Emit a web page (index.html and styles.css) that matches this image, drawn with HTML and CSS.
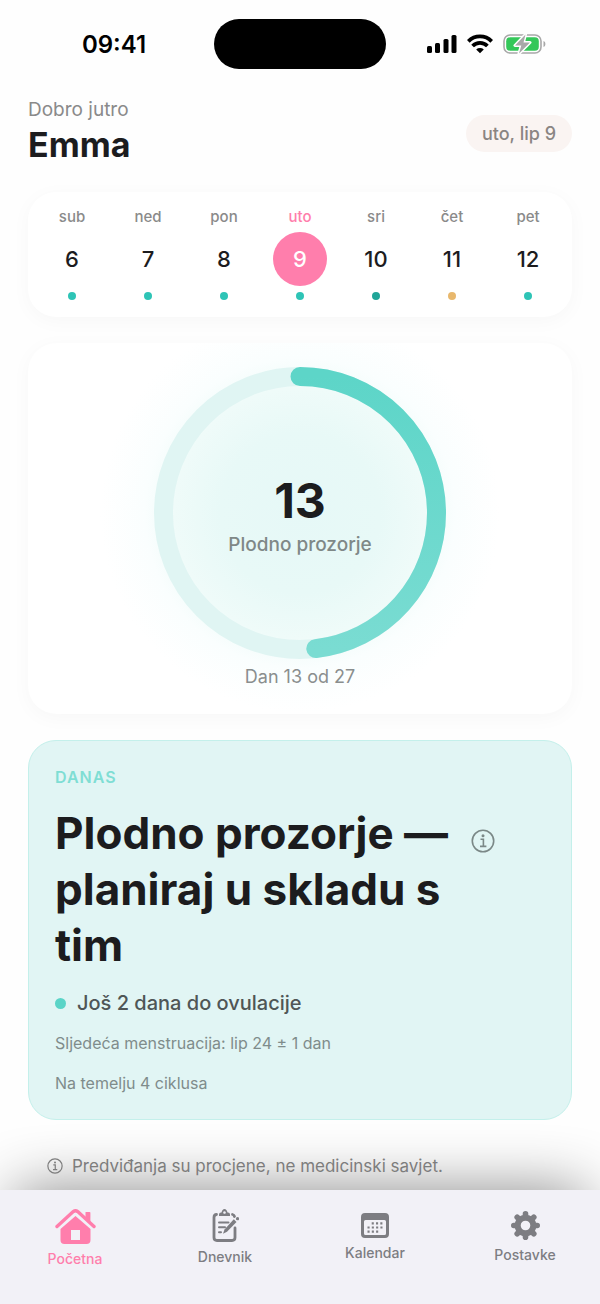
FILE: index.html
```html
<!DOCTYPE html>
<html lang="hr">
<head>
    <meta charset="UTF-8">
    <meta name="viewport" content="width=device-width, initial-scale=1.0">
    <title>Početna</title>
    <link rel="stylesheet" href="styles.css">
</head>
<body>
    <div class="status-bar">
        <div class="time">09:41</div>
        <div class="island"></div>
        <div class="status-icons">
            <svg width="30" height="20" viewBox="0 0 30 20">
                <rect x="0" y="12" width="5" height="7" rx="1.5"/>
                <rect x="8" y="9" width="5" height="10" rx="1.5"/>
                <rect x="16.500" y="5" width="5" height="14" rx="1.5"/>
                <rect x="24.500" y="1" width="5" height="18" rx="1.5"/>
            </svg>
            <svg width="26" height="20" viewBox="0 0 26 20">
                <g fill="none" stroke="#000" stroke-width="3.800">
                    <path d="M1.300 7.300 A16.500 16.500 0 0 1 24.700 7.300"/>
                    <path d="M5.600 12 A10.500 10.500 0 0 1 20.400 12"/>
                </g>
                <path d="M13 19.200 L9.200 15.600 A5.600 5.600 0 0 1 16.800 15.600 Z"/>
            </svg>
            <svg width="43" height="20" viewBox="0 0 43 20">
                <rect x="1" y="1" width="37" height="18" rx="6" fill="none" stroke="#a8a8a8" stroke-width="1.600"/>
                <path d="M40.500 7 C43 7.500 43 12.500 40.500 13 Z" fill="#a8a8a8"/>
                <rect x="3.200" y="3.200" width="32.600" height="13.600" rx="4" fill="#34c759"/>
                <path d="M22.500 0.500 L12 11.500 H18.300 L16 19.500 L27 8.500 H20.500 Z" fill="#a8a8a8" stroke="#fff" stroke-width="3" paint-order="stroke" stroke-linejoin="round"/>
            </svg>
        </div>
    </div>

    <main class="content">
        <header class="header">
            <div>
                <p class="greeting">Dobro jutro</p>
                <h1>Emma</h1>
            </div>
            <span class="date-pill">uto, lip 9</span>
        </header>

        <section class="card week">
            <button class="day"><span class="day-name">sub</span><span class="day-number">6</span><span class="dot"></span></button>
            <button class="day"><span class="day-name">ned</span><span class="day-number">7</span><span class="dot"></span></button>
            <button class="day"><span class="day-name">pon</span><span class="day-number">8</span><span class="dot"></span></button>
            <button class="day selected"><span class="day-name">uto</span><span class="day-number">9</span><span class="dot"></span></button>
            <button class="day"><span class="day-name">sri</span><span class="day-number">10</span><span class="dot ovulation"></span></button>
            <button class="day"><span class="day-name">čet</span><span class="day-number">11</span><span class="dot luteal"></span></button>
            <button class="day"><span class="day-name">pet</span><span class="day-number">12</span><span class="dot"></span></button>
        </section>

        <section class="card cycle">
            <div class="ring">
                <svg width="292" height="292" viewBox="0 0 292 292">
                    <defs>
                        <linearGradient id="arc" x1="0" y1="0" x2="1" y2="0">
                            <stop offset="0" stop-color="#7adcd2"/>
                            <stop offset="1" stop-color="#5dd5c8"/>
                        </linearGradient>
                    </defs>
                    <g fill="none" stroke-width="19" transform="rotate(-90 146 146)">
                        <circle cx="146" cy="146" r="136.500" stroke="#e0f5f3"/>
                        <circle cx="146" cy="146" r="136.500" stroke="url(#arc)" stroke-linecap="round" pathLength="27" stroke-dasharray="13 27"/>
                    </g>
                </svg>
                <div class="ring-label">
                    <strong>13</strong>
                    <span>Plodno prozorje</span>
                </div>
            </div>
            <p class="cycle-day">Dan 13 od 27</p>
        </section>

        <section class="today">
            <p class="today-label">Danas</p>
            <div class="today-title">
                <h2>Plodno prozorje — planiraj u skladu s tim</h2>
                <button class="info-button" aria-label="Info">
                    <svg width="24" height="24" viewBox="0 0 24 24" fill="none" stroke="#7b8887" stroke-width="1.600">
                        <circle cx="12" cy="12" r="10.700"/>
                        <path d="M9.500 10.300 H12.400 V17.300 M9 17.400 H15.400"/>
                        <circle cx="12" cy="6.800" r="1.500" fill="#7b8887" stroke="none"/>
                    </svg>
                </button>
            </div>
            <p class="countdown">Još 2 dana do ovulacije</p>
            <p class="detail">Sljedeća menstruacija: lip 24 ± 1 dan</p>
            <p class="detail">Na temelju 4 ciklusa</p>
        </section>

        <p class="disclaimer">
            <svg width="16" height="16" viewBox="0 0 24 24" fill="none" stroke="#7d7d7d" stroke-width="1.800">
                <circle cx="12" cy="12" r="10.700"/>
                <path d="M9.500 10.300 H12.400 V17.300 M9 17.400 H15.400"/>
                <circle cx="12" cy="6.800" r="1.500" fill="#7d7d7d" stroke="none"/>
            </svg>
            Predviđanja su procjene, ne medicinski savjet.
        </p>
    </main>

    <nav class="tab-bar">
        <a href="#" class="tab active">
            <svg width="41" height="36" viewBox="0 0 41 36">
                <path d="M2 18.500 L18.300 3.600 Q20.500 1.700 22.700 3.600 L39 18.500" fill="none" stroke="currentColor" stroke-width="3.400" stroke-linecap="round"/>
                <path d="M30.500 4.600 Q30.500 4 31.200 4 H34.600 Q35.400 4 35.400 4.800 V14 L30.500 9.500 Z" fill="currentColor"/>
                <path d="M20.500 8 L35.500 21 V32 Q35.500 36 31.500 36 H9.500 Q5.500 36 5.500 32 V21 Z M16 22 V32 H25 V22 Z" fill="currentColor" fill-rule="evenodd"/>
            </svg>
            <span>Početna</span>
        </a>
        <a href="#" class="tab">
            <svg width="28" height="33" viewBox="-1.500 0 28 33">
                <g fill="none" stroke="currentColor" stroke-width="2.800" stroke-linecap="round">
                    <path d="M4 5.500 Q1.500 5.500 1.500 8.500 V28.500 Q1.500 31.500 4.500 31.500 H19.500 Q22.500 31.500 22.500 28.500 V19"/>
                    <path d="M20 5.500 Q21.500 5.800 22 7.500"/>
                </g>
                <path d="M6.500 7 V5.500 Q6.500 3.500 8.500 3.500 H9 Q9.800 0 12 0 T15 3.500 H15.500 Q17.500 3.500 17.500 5.500 V7 Z M12 2.200 A1.300 1.300 0 1 0 12.010 2.200 Z" fill="currentColor" fill-rule="evenodd"/>
                <path d="M6.500 13.500 H16 M6.500 18.300 H12.500 M6.500 23.200 H8.500" fill="none" stroke="currentColor" stroke-width="2" stroke-linecap="round"/>
                <path d="M21.300 10.300 L24 13 L14.500 22.800 L10.500 24.700 L12 20.500 Z" fill="currentColor"/>
                <circle cx="25" cy="9.700" r="1.600" fill="currentColor"/>
            </svg>
            <span>Dnevnik</span>
        </a>
        <a href="#" class="tab">
            <svg width="28" height="25" viewBox="0 0 28 25">
                <path d="M4 0 H24 Q28 0 28 4 V21 Q28 25 24 25 H4 Q0 25 0 21 V4 Q0 0 4 0 Z M4.500 7 Q3 7 3 8.500 V20.500 Q3 22 4.500 22 H23.500 Q25 22 25 20.500 V8.500 Q25 7 23.500 7 Z" fill="currentColor" fill-rule="evenodd"/>
                <path d="M10.700 10.400 H22 M6.500 14.500 H22 M6.500 18.600 H17.500" fill="none" stroke="currentColor" stroke-width="2.100" stroke-dasharray="2.100 2.200"/>
            </svg>
            <span>Kalendar</span>
        </a>
        <a href="#" class="tab">
            <svg width="29" height="29" viewBox="-14.500 -14.500 29 29">
                <circle r="7.800" fill="none" stroke="currentColor" stroke-width="6"/>
                <g stroke="currentColor" stroke-width="5.600" stroke-linecap="round">
                    <path d="M0 -10 V-11.700 M0 10 V11.700 M-10 0 H-11.700 M10 0 H11.700"/>
                    <path d="M7 -7 L8.300 -8.300 M7 7 L8.300 8.300 M-7 7 L-8.300 8.300 M-7 -7 L-8.300 -8.300"/>
                </g>
            </svg>
            <span>Postavke</span>
        </a>
    </nav>
</body>
</html>
```

FILE: styles.css
```css
* {
    box-sizing: border-box;
}
body {
    margin: 0;
    min-height: 100vh;
    display: flex;
    flex-direction: column;
    background-color: #fefefe;
    color: #1c1c1e;
    font-family: Inter, "Liberation Sans", sans-serif;
}
h1, h2, p {
    margin: 0;
}
button {
    padding: 0;
    border: none;
    background: none;
    color: inherit;
    font: inherit;
    cursor: pointer;
}
svg {
    display: block;
    flex: none;
}

/* status bar */
.status-bar {
    display: grid;
    grid-template-columns: 1fr 172px 1fr;
    align-items: center;
    justify-items: center;
    height: 88px;
    padding: 0 14px;
    color: #000;
}
.time {
    font-size: 24px;
    font-weight: 600;
}
.island {
    width: 100%;
    height: 50px;
    border-radius: 25px;
    background-color: #000;
}
.status-icons {
    display: flex;
    gap: 10px;
}

.content {
    flex: 1;
    padding: 10px 28px 0;
}

/* header */
.header {
    display: flex;
    align-items: center;
    justify-content: space-between;
    margin-bottom: 24px;
}
.greeting {
    color: #8a8a8a;
    font-size: 19px;
    line-height: 24px;
}
.header h1 {
    font-size: 34px;
    line-height: 46px;
}
.date-pill {
    padding: 6px 16px;
    border-radius: 20px;
    background-color: #faf4f2;
    color: #8a8583;
    font-size: 18px;
    font-weight: 500;
    line-height: 25px;
}

.card {
    margin-bottom: 26px;
    border-radius: 28px;
    background-color: #fff;
    box-shadow: 0 4px 20px rgba(0, 0, 0, 0.03);
}

/* week strip */
.week {
    display: flex;
    padding: 16px 6px 17px;
}
.day {
    flex: 1;
    display: flex;
    flex-direction: column;
    align-items: center;
    gap: 6px;
}
.day-name {
    color: #8a8a8a;
    font-size: 15px;
    font-weight: 500;
    line-height: 18px;
}
.day-number {
    width: 54px;
    border-radius: 50%;
    font-size: 22px;
    font-weight: 500;
    line-height: 54px;
}
.dot {
    width: 8px;
    height: 8px;
    border-radius: 50%;
    background-color: #2ec4b6;
}
.dot.ovulation {
    background-color: #20a598;
}
.dot.luteal {
    background-color: #e8b86d;
}
.selected .day-name {
    color: #ff7eac;
}
.selected .day-number {
    background-color: #ff7eac;
    color: #fff;
}

/* cycle ring */
.cycle {
    display: flex;
    flex-direction: column;
    align-items: center;
    gap: 6px;
    padding: 24px 24px 25px;
    background-image: radial-gradient(circle at 50% 170px, #e6f8f7 0, #e8f9f7 80px, #effbf9 125px, #fafefe 155px, #fff 200px);
}
.ring {
    display: grid;
}
.ring > * {
    grid-area: 1 / 1;
}
.ring-label {
    display: flex;
    flex-direction: column;
    align-items: center;
    justify-content: center;
    color: #7f8887;
    font-size: 19px;
    font-weight: 500;
    line-height: 24px;
}
.ring-label strong {
    color: #1c1c1e;
    font-size: 48px;
    font-weight: 700;
    line-height: 64px;
}
.cycle-day {
    color: #8a8e8e;
    font-size: 18px;
    line-height: 24px;
}

/* today card */
.today {
    padding: 24px 26px;
    border: 1px solid #c4f0eb;
    border-radius: 28px;
    background-color: #e1f5f4;
}
.today-label {
    color: #7fded4;
    font-size: 16px;
    font-weight: 600;
    letter-spacing: 1px;
    line-height: 24px;
    text-transform: uppercase;
}
.today-title {
    display: flex;
    align-items: flex-start;
    gap: 16px;
    margin: 16px 0 18px;
}
.today-title h2 {
    max-width: 400px;
    font-size: 44px;
    line-height: 56px;
}
.info-button {
    margin-top: 24px;
}
.countdown {
    display: flex;
    align-items: center;
    gap: 11px;
    color: #4f5656;
    font-size: 20px;
    font-weight: 500;
    line-height: 24px;
}
.countdown::before {
    content: "";
    width: 11px;
    height: 11px;
    border-radius: 50%;
    background-color: #5ad4c7;
}
.detail {
    margin-top: 16px;
    color: #7f8c8b;
    font-size: 16px;
    line-height: 24px;
}

.disclaimer {
    position: relative;
    z-index: 1;
    display: flex;
    align-items: center;
    gap: 9px;
    padding: 34px 19px 8px;
    color: #7d7d7d;
    font-size: 17px;
    line-height: 24px;
}

/* bottom tabs */
.tab-bar {
    display: flex;
    height: 114px;
    padding-bottom: 19px;
    background-color: #f2f1f7;
    box-shadow: 0 -15px 60px -15px rgba(0, 0, 0, 0.46);
}
.tab {
    flex: 1;
    display: flex;
    flex-direction: column;
    align-items: center;
    justify-content: center;
    gap: 6px;
    color: #7d7d82;
    font-size: 14px;
    font-weight: 500;
    line-height: 18px;
    text-decoration: none;
}
.tab.active {
    color: #ff7eac;
}
```
